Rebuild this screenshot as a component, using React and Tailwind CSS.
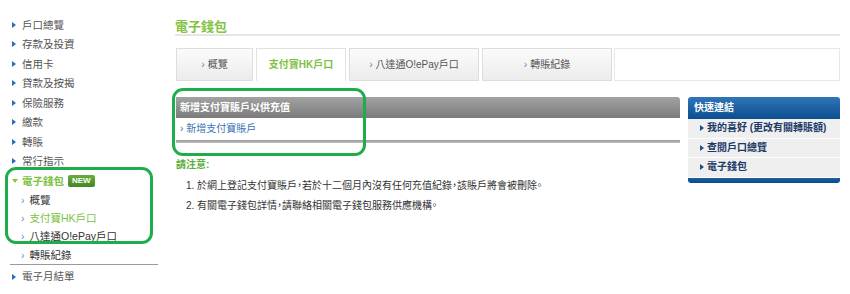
import React from "react";

const MENU = ["戶口總覽", "存款及投資", "信用卡", "貸款及按揭", "保險服務", "繳款", "轉賬", "常行指示"];
const WALLET_SUB = [
  { label: "概覽" },
  { label: "支付寶HK戶口", active: true },
  { label: "八達通O!ePay戶口" },
  { label: "轉賬紀錄" },
];
const TABS = [
  { label: "概覽", w: "w-[77px]" },
  { label: "支付寶HK戶口", w: "w-[90px]", active: true },
  { label: "八達通O!ePay戶口", w: "w-[130px]" },
  { label: "轉賬紀錄", w: "w-[130px]" },
];
const QUICK = ["我的喜好 (更改有關轉賬額)", "查閱戶口總覽", "電子錢包"];

function Tri({ className = "fill-[#2a6cb5]" }) {
  return (
    <svg width="4" height="6" viewBox="0 0 4 6" className={className}>
      <path d="M0 0L4 3L0 6Z" />
    </svg>
  );
}

function Sidebar() {
  return (
    <div className="relative w-[175px] shrink-0 pt-[15px] text-[10.5px]">
      <ul>
        {MENU.map((m) => (
          <li key={m} className="flex h-[19.5px] items-center gap-[6px] pl-[12px] text-[#555]">
            <Tri />
            <span>{m}</span>
          </li>
        ))}
        <li className="flex h-[20px] items-center pl-[12px]">
          <svg width="6" height="4" viewBox="0 0 6 4" className="mr-[4px] fill-[#8cc63f]">
            <path d="M0 0H6L3 4Z" />
          </svg>
          <span className="font-bold text-[#7dc242]">電子錢包</span>
          <span className="ml-[4px] rounded-[2px] bg-gradient-to-b from-[#6aad3c] to-[#3f8a22] px-[4px] text-[8px] leading-[12px] font-bold text-white">
            NEW
          </span>
        </li>
        {WALLET_SUB.map((s) => (
          <li key={s.label} className="flex h-[18.3px] items-center pl-[21px]">
            <span className="mr-[5px] text-[#5b8fc4]">›</span>
            <span className={s.active ? "text-[#7dc242]" : "text-[#333]"}>{s.label}</span>
          </li>
        ))}
        <li className="ml-[10px] mr-[17px] border-t border-[#9a9a9a]" />
        <li className="flex h-[23px] items-center gap-[6px] pl-[12px] text-[#555]">
          <Tri />
          <span>電子月結單</span>
        </li>
      </ul>
      <div className="pointer-events-none absolute left-[5px] top-[167px] h-[77px] w-[148px] rounded-[11px] border-[3px] border-[#1fad4c]" />
    </div>
  );
}

export default function App() {
  return (
    <div className="flex h-[294px] w-[850px] bg-white font-['Liberation_Sans','Noto_Sans_CJK_TC',sans-serif] leading-none [font-feature-settings:'halt']">
      <Sidebar />
      <div className="relative w-[665px] pt-[18px] text-[10px]">
        <h1 className="flex h-[18px] items-center border-b-2 border-[#e6e6e6] text-[13px] font-bold text-[#82c341]">
          電子錢包
        </h1>
        <div className="mt-[12px] flex h-[33px] gap-[3px] pl-[1px]">
          {TABS.map((t) =>
            t.active ? (
              <div key={t.label} className={`${t.w} flex items-center justify-center border border-b-0 border-[#e2e2e2] bg-white font-bold text-[#7dc242]`}>
                {t.label}
              </div>
            ) : (
              <div key={t.label} className={`${t.w} flex items-center justify-center border border-[#dddddd] bg-gradient-to-b from-[#fbfbfb] to-[#ececec] text-[#555]`}>
                <span className="mr-[3px] text-[#4a86c5]">›</span>
                {t.label}
              </div>
            )
          )}
          <div className="ml-[-1px] flex-1 border border-[#e8e8e8] bg-white" />
        </div>
        <div className="mt-[16px] flex gap-[8px] pl-[1px]">
          <div className="w-[504px]">
            <div className="flex h-[21px] items-center rounded-tr-[3px] bg-gradient-to-b from-[#a2a2a2] to-[#7b7b7b] pl-[4px] font-bold text-white">
              新增支付寶賬戶以供充值
            </div>
            <div className="flex h-[22px] items-center pl-[4px] text-[#3d72b4]">
              <span className="mr-[3px]">›</span>新增支付寶賬戶
            </div>
            <div className="h-[3px] bg-gradient-to-b from-[#9a9a9a] to-[#bdbdbd]" />
            <p className="mt-[17px] font-bold text-[#5cae3a]">請注意:</p>
            <ol className="mt-[11px] space-y-[10px] pl-[10px] text-[#333]">
              <li>1. 於網上登記支付寶賬戶，若於十二個月內沒有任何充值紀錄，該賬戶將會被刪除。</li>
              <li>2. 有關電子錢包詳情，請聯絡相關電子錢包服務供應機構。</li>
            </ol>
          </div>
          <div className="w-[152px]">
            <div className="flex h-[22px] items-center rounded-t-[3px] bg-gradient-to-b from-[#2f75b8] to-[#0b4f90] pl-[6px] font-bold text-white">
              快速連結
            </div>
            {QUICK.map((q) => (
              <div key={q} className="flex h-[19.5px] items-center gap-[3px] border-b border-white bg-[#efefef] pl-[12px] font-bold text-[#1c3a68]">
                <Tri className="fill-[#1c4f8c]" />
                <span>{q}</span>
              </div>
            ))}
            <div className="h-[5px] rounded-b-[3px] bg-gradient-to-b from-[#1a5fa3] to-[#0b4a88]" />
          </div>
        </div>
        <div className="pointer-events-none absolute left-[-3px] top-[88px] h-[68px] w-[194px] rounded-[11px] border-[3px] border-[#1fad4c]" />
      </div>
    </div>
  );
}
